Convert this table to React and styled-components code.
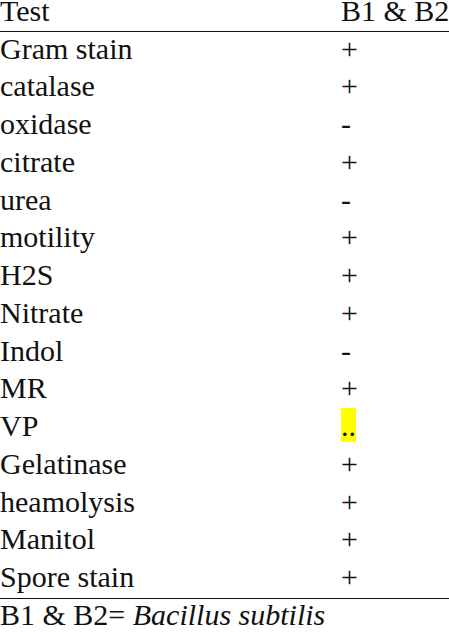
import React from 'react';
import styled, { createGlobalStyle } from 'styled-components';

const Global = createGlobalStyle`
  html, body {
    margin: 0;
    padding: 0;
    background: #ffffff;
    overflow: hidden;
  }
`;

const Sheet = styled.div`
  width: 449px;
  height: 635px;
  overflow: hidden;
  font-family: "Liberation Serif", "Times New Roman", serif;
  font-size: 30px;
  color: #111;
`;

const Row = styled.div`
  display: grid;
  grid-template-columns: 341px 1fr;
  height: 37.75px;
  line-height: 34.6px;
  white-space: nowrap;
`;

const HeadRow = styled(Row)`
  height: auto;
  line-height: 22px;
  padding-bottom: 8.5px;
  border-bottom: 1.5px solid #111;
`;

const Body = styled.div`
  border-bottom: 1.5px solid #111;
`;

const Cell = styled.div``;

const Mark = styled.span`
  background: #ffff00;
  padding: 1px 0 0;
`;

const Note = styled.div`
  line-height: 32.3px;
  white-space: nowrap;
`;

const rows = [
  ['Gram stain', '+'],
  ['catalase', '+'],
  ['oxidase', '-'],
  ['citrate', '+'],
  ['urea', '-'],
  ['motility', '+'],
  ['H2S', '+'],
  ['Nitrate', '+'],
  ['Indol', '-'],
  ['MR', '+'],
  ['VP', '..', true],
  ['Gelatinase', '+'],
  ['heamolysis', '+'],
  ['Manitol', '+'],
  ['Spore stain', '+'],
];

export default function App() {
  return (
    <Sheet>
      <Global />
      <HeadRow>
        <Cell>Test</Cell>
        <Cell>B1 &amp; B2</Cell>
      </HeadRow>
      <Body>
        {rows.map(([name, result, marked]) => (
          <Row key={name}>
            <Cell>{name}</Cell>
            <Cell>{marked ? <Mark>{result}</Mark> : result}</Cell>
          </Row>
        ))}
      </Body>
      <Note>
        B1 &amp; B2= <i>Bacillus subtilis</i>
      </Note>
    </Sheet>
  );
}
